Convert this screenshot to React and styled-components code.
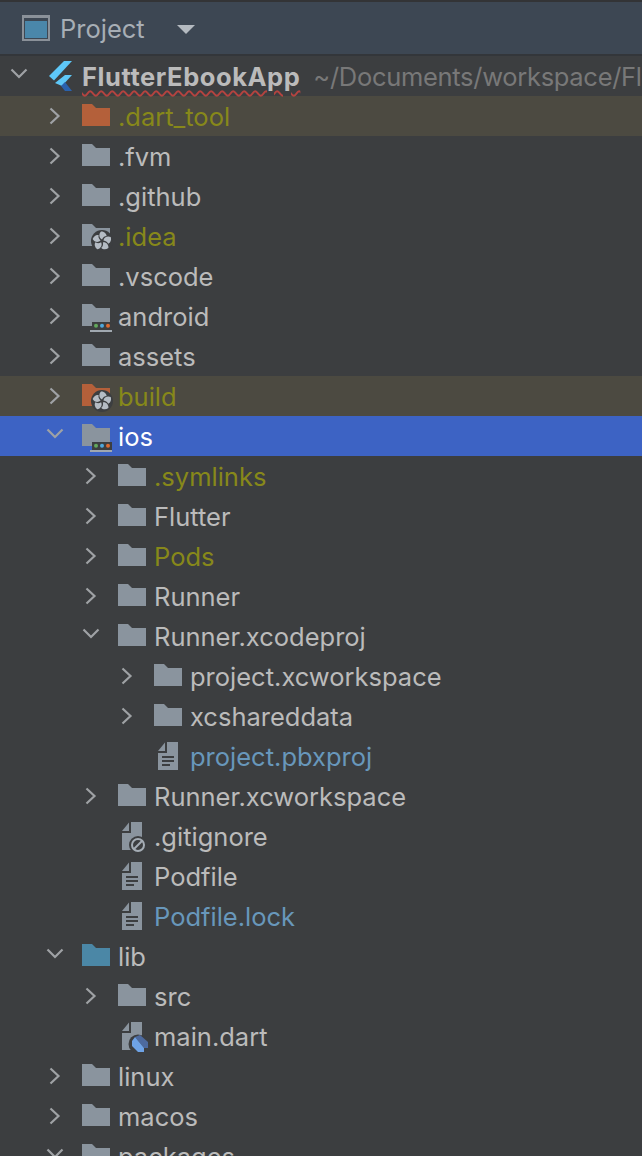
import React from "react";
import styled, { createGlobalStyle } from "styled-components";

const Colors = {
  panel: "#3c3e40",
  header: "#3d4753",
  text: "#bbbbbb",
  olive: "#87881a",
  blue: "#6897bb",
  folder: "#8a949e",
  hint: "#787878",
};

const GlobalStyle = createGlobalStyle`
  html, body {
    margin: 0;
    padding: 0;
    background: ${Colors.panel};
  }
`;

const Style = {
  Container: styled.div`
    height: 100vh;
    overflow: hidden;
    background: ${Colors.panel};
    border-top: 2px solid #333436;
    box-sizing: border-box;
    font-family: Inter, "Liberation Sans", sans-serif;
    font-size: 25.5px;
    -webkit-font-smoothing: antialiased;
  `,
  Header: styled.div`
    display: flex;
    align-items: center;
    height: 52px;
    padding-left: 22px;
    background: ${Colors.header};
    border-bottom: 2px solid #33363a;
    box-sizing: content-box;
  `,
  ToolIcon: styled.div`
    width: 28px;
    height: 26px;
    border: 2px solid #8a9199;
    border-top-width: 3px;
    box-sizing: border-box;
    padding: 3px 1px 1px;
    margin-right: 10px;
    &::before {
      content: "";
      display: block;
      height: 100%;
      background: #4a87aa;
    }
  `,
  Title: styled.span`
    color: #a7aeb5;
  `,
  Caret: styled.span`
    width: 0;
    height: 0;
    margin-left: 32px;
    margin-top: 3px;
    border-left: 9px solid transparent;
    border-right: 9px solid transparent;
    border-top: 9px solid #b4bac0;
  `,
  Row: styled.div`
    display: flex;
    align-items: center;
    height: 40px;
    padding-left: ${(props) => 46 + props.$depth * 36}px;
    background: ${(props) =>
      props.$selected ? "#3d63c4" : props.$ignored ? "#4c4a41" : "transparent"};
    white-space: nowrap;
  `,
  ArrowSlot: styled.div`
    flex: 0 0 36px;
    height: 40px;
  `,
  IconSlot: styled.div`
    flex: 0 0 36px;
    height: 40px;
  `,
  Label: styled.span`
    color: ${(props) => props.$color};
    padding-top: 2px;
    line-height: 38px;
  `,
  RootName: styled.span`
    color: ${Colors.text};
    font-weight: 700;
    letter-spacing: 0.55px;
    padding-top: 2px;
    line-height: 38px;
    text-decoration: underline wavy #b5433f 1.5px;
    text-underline-offset: 4px;
  `,
  RootPath: styled.span`
    color: ${Colors.hint};
    margin-left: 13px;
    letter-spacing: -0.3px;
    padding-top: 2px;
    line-height: 38px;
  `,
};

function Arrow({ open }) {
  return (
    <svg width="36" height="40" viewBox="0 0 36 40" style={{ display: "block" }}>
      {open ? (
        <path d="M1.5 13.5 L9 21 L16.5 13.5" fill="none" stroke="#9fa2a5" strokeWidth="2.2" />
      ) : (
        <path d="M4.5 12.5 L12.5 20 L4.5 27.5" fill="none" stroke="#9fa2a5" strokeWidth="2.2" />
      )}
    </svg>
  );
}

function Fan() {
  return (
    <g transform="translate(20 25)">
      <circle r="11" fill={Colors.panel} />
      {[0, 72, 144, 216, 288].map((angle) => (
        <path
          key={angle}
          transform={`rotate(${angle})`}
          d="M0 -1.5 C-3 -3 -3.5 -7 -1 -9.5 C2 -9.5 4.5 -7.5 4.6 -5 C3 -5 1 -4 0 -1.5 Z"
          fill="#b5bcc4"
        />
      ))}
    </g>
  );
}

function Module() {
  return (
    <g>
      <rect x="10" y="26" width="20" height="8" fill={Colors.panel} />
      <circle cx="14" cy="29.7" r="2" fill="#62a85c" />
      <circle cx="20" cy="29.7" r="2" fill="#4fa8dc" />
      <circle cx="26" cy="29.7" r="2" fill="#dc6a30" />
      <rect x="8" y="34" width="22" height="2" fill="#a0a8b0" />
    </g>
  );
}

function Folder({ color = Colors.folder, badge }) {
  return (
    <svg width="36" height="40" viewBox="0 0 36 40" style={{ display: "block" }}>
      <path d="M0 8 H10 L14 12 H28 V30 H0 Z" fill={color} />
      {badge === "fan" && <Fan />}
      {badge === "module" && <Module />}
    </svg>
  );
}

function FileIcon({ badge }) {
  return (
    <svg width="36" height="40" viewBox="0 0 36 40" style={{ display: "block" }}>
      <path d="M4 15 L11 6.5 V15 Z" fill={Colors.folder} />
      <path d="M13 6 H24 V34 H4 V17 H13 Z" fill={Colors.folder} />
      {!badge && (
        <g fill={Colors.panel}>
          <rect x="8" y="20" width="12" height="2" />
          <rect x="8" y="24" width="12" height="2" />
          <rect x="8" y="28" width="8" height="2" />
        </g>
      )}
      {badge === "ignore" && (
        <g>
          <circle cx="20" cy="29" r="9" fill={Colors.panel} />
          <circle cx="20" cy="29" r="6" fill="none" stroke="#a5adb5" strokeWidth="2" />
          <path d="M16 33 L24 25" stroke="#a5adb5" strokeWidth="2" />
        </g>
      )}
      {badge === "dart" && (
        <g>
          <circle cx="20" cy="28" r="9.5" fill={Colors.panel} />
          <path d="M17 21 L22 19 L30 26 V32 H26 Z" fill="#4d6a9e" />
          <path d="M14 25 L17 21 L26 32 V36 H20 L14 30 Z" fill="#6ea3e6" />
        </g>
      )}
    </svg>
  );
}

function FlutterLogo() {
  return (
    <svg width="36" height="40" viewBox="0 0 36 40" style={{ display: "block" }}>
      <path d="M3 20 L18 5 H26 L8 24.5 Z" fill="#5ec8f8" />
      <path d="M9 27 L19 19 H26 L16 30 Z" fill="#5ec8f8" />
      <path d="M15 30 L19 26 L26 35 H19 Z" fill="#2a62ad" />
    </svg>
  );
}

const nodes = [
  { name: ".dart_tool", depth: 0, kind: "folder", color: "#b4603a", text: Colors.olive, ignored: true },
  { name: ".fvm", depth: 0, kind: "folder" },
  { name: ".github", depth: 0, kind: "folder" },
  { name: ".idea", depth: 0, kind: "folder", badge: "fan", text: Colors.olive },
  { name: ".vscode", depth: 0, kind: "folder" },
  { name: "android", depth: 0, kind: "folder", badge: "module" },
  { name: "assets", depth: 0, kind: "folder" },
  { name: "build", depth: 0, kind: "folder", color: "#b4603a", badge: "fan", text: Colors.olive, ignored: true },
  { name: "ios", depth: 0, kind: "folder", badge: "module", open: true, selected: true, text: "#ffffff" },
  { name: ".symlinks", depth: 1, kind: "folder", text: Colors.olive },
  { name: "Flutter", depth: 1, kind: "folder" },
  { name: "Pods", depth: 1, kind: "folder", text: Colors.olive },
  { name: "Runner", depth: 1, kind: "folder" },
  { name: "Runner.xcodeproj", depth: 1, kind: "folder", open: true },
  { name: "project.xcworkspace", depth: 2, kind: "folder" },
  { name: "xcshareddata", depth: 2, kind: "folder" },
  { name: "project.pbxproj", depth: 2, kind: "file", text: Colors.blue },
  { name: "Runner.xcworkspace", depth: 1, kind: "folder" },
  { name: ".gitignore", depth: 1, kind: "file", badge: "ignore" },
  { name: "Podfile", depth: 1, kind: "file" },
  { name: "Podfile.lock", depth: 1, kind: "file", text: Colors.blue },
  { name: "lib", depth: 0, kind: "folder", color: "#4b87a6", open: true },
  { name: "src", depth: 1, kind: "folder" },
  { name: "main.dart", depth: 1, kind: "file", badge: "dart" },
  { name: "linux", depth: 0, kind: "folder" },
  { name: "macos", depth: 0, kind: "folder" },
  { name: "packages", depth: 0, kind: "folder", open: true },
];

function App() {
  return (
    <Style.Container>
      <GlobalStyle />
      <Style.Header>
        <Style.ToolIcon />
        <Style.Title>Project</Style.Title>
        <Style.Caret />
      </Style.Header>
      <Style.Row $depth={-1}>
        <Style.ArrowSlot>
          <Arrow open />
        </Style.ArrowSlot>
        <Style.IconSlot>
          <FlutterLogo />
        </Style.IconSlot>
        <Style.RootName>FlutterEbookApp</Style.RootName>
        <Style.RootPath>~/Documents/workspace/FlutterEbookApp</Style.RootPath>
      </Style.Row>
      {nodes.map((node) => (
        <Style.Row
          key={node.name}
          $depth={node.depth}
          $selected={node.selected}
          $ignored={node.ignored}
        >
          <Style.ArrowSlot>{node.kind === "folder" && <Arrow open={node.open} />}</Style.ArrowSlot>
          <Style.IconSlot>
            {node.kind === "folder" ? (
              <Folder color={node.color} badge={node.badge} />
            ) : (
              <FileIcon badge={node.badge} />
            )}
          </Style.IconSlot>
          <Style.Label $color={node.text || Colors.text}>{node.name}</Style.Label>
        </Style.Row>
      ))}
    </Style.Container>
  );
}

export default App;
